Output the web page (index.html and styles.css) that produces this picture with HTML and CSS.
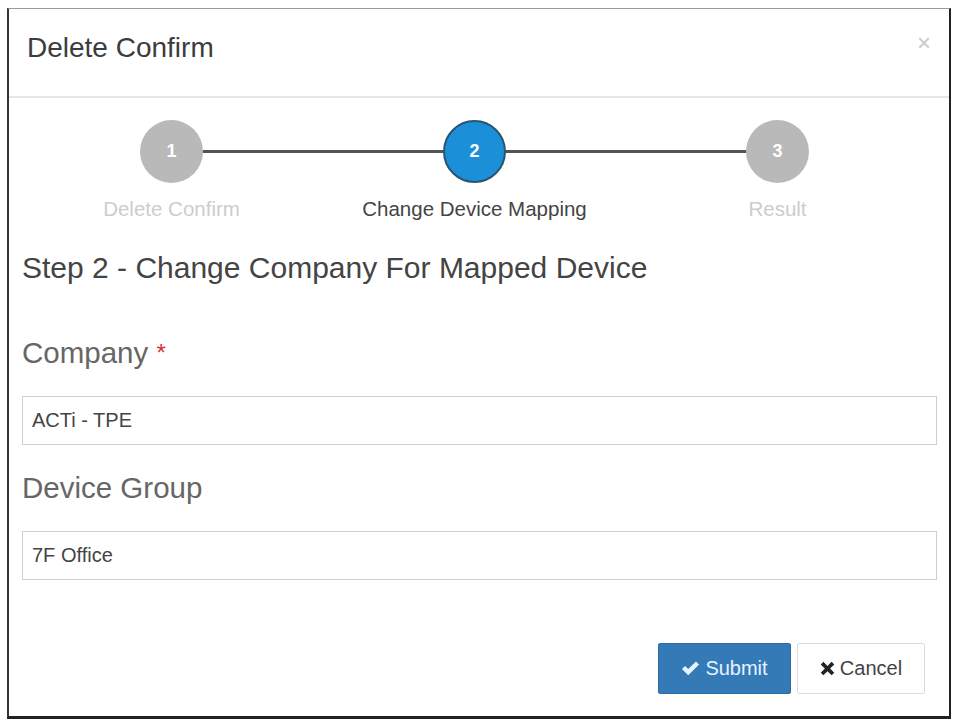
FILE: index.html
```html
<!DOCTYPE html>
<html lang="en">
<head>
    <meta charset="UTF-8">
    <meta name="viewport" content="width=device-width, initial-scale=1.0">
    <title>Delete Confirm</title>
    <link rel="stylesheet" href="styles.css">
</head>
<body>
    <div class="modal">
        <div class="modal-header">
            <h3 class="modal-title">Delete Confirm</h3>
            <span class="close">&times;</span>
        </div>

        <div class="modal-body">
            <!-- Wizard steps -->
            <div class="steps">
                <div class="step done">
                    <div class="step-circle">1</div>
                    <div class="step-label">Delete Confirm</div>
                </div>
                <div class="step active">
                    <div class="step-circle">2</div>
                    <div class="step-label">Change Device Mapping</div>
                </div>
                <div class="step">
                    <div class="step-circle">3</div>
                    <div class="step-label">Result</div>
                </div>
            </div>

            <h4 class="step-title">Step 2 - Change Company For Mapped Device</h4>

            <label class="field-label">Company <span class="required">*</span></label>
            <div class="field-input">ACTi - TPE</div>

            <label class="field-label second">Device Group</label>
            <div class="field-input">7F Office</div>

            <div class="modal-footer">
                <button class="btn btn-primary">
                    <svg class="icon" viewBox="0 0 16 16" width="19" height="19"><path d="M0.8 8.4 L3.4 5.8 L6.1 8.5 L12.6 2 L15.2 4.6 L6.1 13.7 Z" fill="currentColor"/></svg>
                    Submit
                </button>
                <button class="btn btn-default">
                    <svg class="icon" viewBox="0 0 16 16" width="15" height="15"><path d="M3.6 0.8 L8 5.2 L12.4 0.8 L15.2 3.6 L10.8 8 L15.2 12.4 L12.4 15.2 L8 10.8 L3.6 15.2 L0.8 12.4 L5.2 8 L0.8 3.6 Z" fill="currentColor"/></svg>
                    Cancel
                </button>
            </div>
        </div>
    </div>
</body>
</html>
```

FILE: styles.css
```css
body {
    margin: 0;
    background: #fff;
    font-family: "Liberation Sans", Arial, sans-serif;
    color: #333;
}
.modal {
    box-sizing: border-box;
    width: 944px;
    height: 711px;
    margin: 8px 0 0 7px;
    border-top: 1px solid #9a9a9a;
    border-left: 2px solid #333;
    border-right: 2px solid #222;
    border-bottom: 3px solid #222;
}
.modal-header {
    display: flex;
    justify-content: space-between;
    align-items: flex-start;
    height: 87px;
    padding: 0 18px 0 18px;
    border-bottom: 2px solid #e6e6e6;
}
.modal-title {
    margin: 23px 0 0;
    font-size: 28px;
    line-height: 32px;
    font-weight: normal;
    color: #3c3c3c;
}
.close {
    margin-top: 20px;
    font-size: 24px;
    line-height: 28px;
    color: #cacaca;
}
.modal-body {
    padding: 0 12px 0 13px;
}
.steps {
    display: grid;
    grid-template-columns: repeat(3, 303px);
    margin: 22px 0 0 -2px;
}
.step {
    position: relative;
    text-align: center;
}
.step:not(:last-child)::after {
    content: "";
    position: absolute;
    top: 30px;
    left: 50%;
    width: 303px;
    height: 3px;
    background: #545454;
}
.step-circle {
    position: relative;
    z-index: 1;
    box-sizing: border-box;
    width: 63px;
    height: 63px;
    margin: 0 auto;
    border-radius: 50%;
    background: #b9b9b9;
    color: #fff;
    font-size: 18px;
    font-weight: bold;
    line-height: 63px;
}
.step.active .step-circle {
    background: #1b8fd7;
    border: 2px solid #2b5472;
    line-height: 59px;
}
.step-label {
    margin-top: 13px;
    font-size: 20.5px;
    line-height: 26px;
    color: #cdcdcd;
}
.step.active .step-label {
    color: #444;
}
.step-title {
    margin: 28px 0 0;
    font-size: 30px;
    line-height: 36px;
    font-weight: normal;
    color: #444;
}
.field-label {
    display: block;
    margin-top: 49px;
    font-size: 29.5px;
    line-height: 36px;
    color: #666;
}
.field-label.second {
    margin-top: 25px;
}
.required {
    color: #d9313a;
    font-size: 24px;
    vertical-align: top;
}
.field-input {
    box-sizing: border-box;
    height: 49px;
    margin-top: 25px;
    padding: 0 9px;
    border: 1px solid #cfcfcf;
    font-size: 20px;
    line-height: 47px;
    color: #444;
}
.modal-footer {
    display: flex;
    justify-content: flex-end;
    gap: 6px;
    margin-top: 63px;
    padding-right: 12px;
}
.btn {
    display: flex;
    align-items: center;
    justify-content: center;
    gap: 5px;
    box-sizing: border-box;
    height: 51px;
    font-family: "Liberation Sans", Arial, sans-serif;
    font-size: 20px;
    border-radius: 2px;
    cursor: pointer;
}
.btn-primary {
    width: 133px;
    background: #337ab7;
    border: 1px solid #2e6da4;
    color: #e9f2ff;
}
.btn-default {
    width: 128px;
    background: #fff;
    border: 1px solid #dcdcdc;
    color: #444;
}
.btn-default .icon {
    color: #222;
}
```
